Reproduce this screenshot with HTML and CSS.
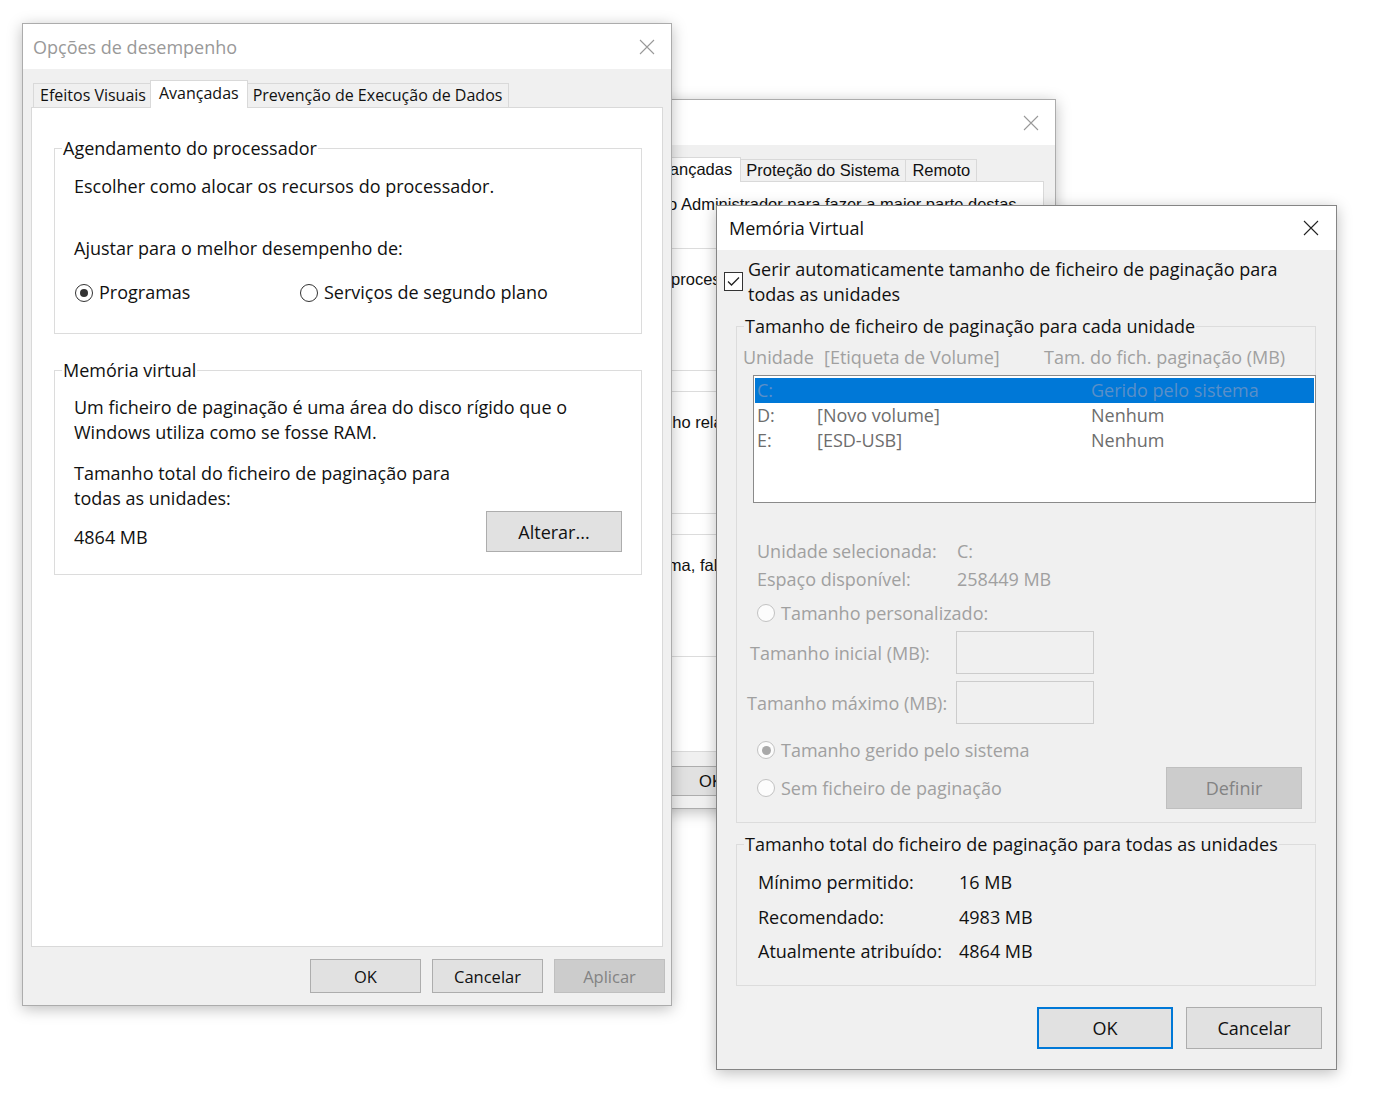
FILE: index.html
```html
<!DOCTYPE html>
<html lang="pt">

<head>
    <meta charset="UTF-8">
    <meta name="viewport" content="width=device-width, initial-scale=1.0">
    <title>Memória Virtual</title>
    <link rel="stylesheet" href="styles.css">
</head>

<body>
    <div class="desktop">

        <!-- Propriedades do Sistema (fica por tras das outras) -->
        <div class="win win-sistema">
            <div class="titlebar">
                <span class="title">Propriedades do Sistema</span>
                <svg class="close" width="16" height="16" viewBox="0 0 16 16"><path d="M1 1L15 15M15 1L1 15" /></svg>
            </div>
            <div class="win-body">
                <div class="tabs">
                    <div class="tab">Nome do Computador</div>
                    <div class="tab">Hardware</div>
                    <div class="tab active">Avançadas</div>
                    <div class="tab">Proteção do Sistema</div>
                    <div class="tab">Remoto</div>
                </div>
                <div class="panel">
                    <p class="aviso">Tem de ter sessão iniciada como Administrador para fazer a maior parte destas alterações.</p>
                    <fieldset class="grp grp-desemp">
                        <legend>Desempenho</legend>
                        <p>Efeitos visuais, agendamento do processador, utilização da memória e memória virtual</p>
                    </fieldset>
                    <fieldset class="grp">
                        <legend>Perfis de Utilizador</legend>
                        <p>Definições do ambiente de trabalho relacionadas com o seu início de sessão</p>
                    </fieldset>
                    <fieldset class="grp grp-arranque">
                        <legend>Arranque e Recuperação</legend>
                        <p>Informações de arranque do sistema, falha do sistema e de depuração</p>
                    </fieldset>
                </div>
                <div class="buttons">
                    <button class="btn">OK</button>
                    <button class="btn">Cancelar</button>
                    <button class="btn off">Aplicar</button>
                </div>
            </div>
        </div>

        <!-- Opções de desempenho -->
        <div class="win win-desempenho">
            <div class="titlebar">
                <span class="title">Opções de desempenho</span>
                <svg class="close" width="16" height="16" viewBox="0 0 16 16"><path d="M1 1L15 15M15 1L1 15" /></svg>
            </div>
            <div class="win-body">
                <div class="tabs">
                    <div class="tab">Efeitos Visuais</div>
                    <div class="tab active">Avançadas</div>
                    <div class="tab">Prevenção de Execução de Dados</div>
                </div>
                <div class="panel">
                    <fieldset class="grp grp-cpu">
                        <legend>Agendamento do processador</legend>
                        <p class="l1">Escolher como alocar os recursos do processador.</p>
                        <p class="l2">Ajustar para o melhor desempenho de:</p>
                        <div class="radios">
                            <label class="opt opt-prog"><span class="radio on"></span>Programas</label>
                            <label class="opt"><span class="radio"></span>Serviços de segundo plano</label>
                        </div>
                    </fieldset>
                    <fieldset class="grp grp-vm">
                        <legend>Memória virtual</legend>
                        <p class="l1">Um ficheiro de paginação é uma área do disco rígido que o<br>Windows utiliza como se fosse RAM.</p>
                        <p class="l3">Tamanho total do ficheiro de paginação para<br>todas as unidades:</p>
                        <div class="vm-row">
                            <span>4864 MB</span>
                            <button class="btn btn-big">Alterar...</button>
                        </div>
                    </fieldset>
                </div>
                <div class="buttons">
                    <button class="btn">OK</button>
                    <button class="btn">Cancelar</button>
                    <button class="btn off">Aplicar</button>
                </div>
            </div>
        </div>

        <!-- Memória Virtual -->
        <div class="win win-virtual">
            <div class="titlebar">
                <span class="title">Memória Virtual</span>
                <svg class="close" width="16" height="16" viewBox="0 0 16 16"><path d="M1 1L15 15M15 1L1 15" /></svg>
            </div>
            <div class="win-body">
                <label class="auto">
                    <span class="check"><svg width="17" height="17" viewBox="0 0 17 17"><path d="M3 8.5L6.5 12L14 4.5" /></svg></span>
                    <span>Gerir automaticamente tamanho de ficheiro de paginação para<br>todas as unidades</span>
                </label>

                <fieldset class="grp grp-drives off">
                    <legend>Tamanho de ficheiro de paginação para cada unidade</legend>
                    <div class="lst-head">
                        <span class="c1">Unidade</span>
                        <span class="c2">[Etiqueta de Volume]</span>
                        <span>Tam. do fich. paginação (MB)</span>
                    </div>
                    <div class="listbox">
                        <div class="row sel"><span class="c1">C:</span><span class="c2"></span><span>Gerido pelo sistema</span></div>
                        <div class="row"><span class="c1">D:</span><span class="c2">[Novo volume]</span><span>Nenhum</span></div>
                        <div class="row"><span class="c1">E:</span><span class="c2">[ESD-USB]</span><span>Nenhum</span></div>
                    </div>
                    <div class="info info-1"><span class="k">Unidade selecionada:</span><span>C:</span></div>
                    <div class="info"><span class="k">Espaço disponível:</span><span>258449 MB</span></div>
                    <label class="opt opt-custom"><span class="radio"></span>Tamanho personalizado:</label>
                    <div class="field field-1"><span class="k">Tamanho inicial (MB):</span><span class="input"></span></div>
                    <div class="field field-2"><span class="k">Tamanho máximo (MB):</span><span class="input"></span></div>
                    <label class="opt opt-sys"><span class="radio on"></span>Tamanho gerido pelo sistema</label>
                    <div class="last-row">
                        <label class="opt"><span class="radio"></span>Sem ficheiro de paginação</label>
                        <button class="btn btn-big off">Definir</button>
                    </div>
                </fieldset>

                <fieldset class="grp grp-total">
                    <legend>Tamanho total do ficheiro de paginação para todas as unidades</legend>
                    <div class="info info-1"><span class="k">Mínimo permitido:</span><span>16 MB</span></div>
                    <div class="info"><span class="k">Recomendado:</span><span>4983 MB</span></div>
                    <div class="info"><span class="k">Atualmente atribuído:</span><span>4864 MB</span></div>
                </fieldset>

                <div class="buttons">
                    <button class="btn btn-big default">OK</button>
                    <button class="btn btn-big">Cancelar</button>
                </div>
            </div>
        </div>

    </div>
</body>

</html>
```

FILE: styles.css
```css
* {
    box-sizing: border-box;
}

body {
    margin: 0;
    background-color: #ffffff;
    font-family: "Open Sans", "Noto Sans", sans-serif;
    font-size: 18px;
    color: #111111;
}

p {
    margin: 0;
    line-height: 25px;
    white-space: nowrap;
}

.desktop {
    position: relative;
    width: 1377px;
    height: 1107px;
    overflow: hidden;
}

/* janelas */
.win {
    position: absolute;
    display: flex;
    flex-direction: column;
    background-color: #f0f0f0;
    border: 1px solid #acacac;
    box-shadow: 0 3px 14px rgba(0, 0, 0, 0.26);
}

.win-sistema {
    left: 372px;
    top: 99px;
    width: 684px;
    height: 710px;
    z-index: 1;
}

.win-desempenho {
    left: 22px;
    top: 23px;
    width: 650px;
    height: 983px;
    z-index: 2;
}

.win-virtual {
    left: 716px;
    top: 205px;
    width: 621px;
    height: 865px;
    z-index: 3;
    border-color: #858585;
}

.titlebar {
    flex: none;
    height: 45px;
    display: flex;
    align-items: center;
    justify-content: space-between;
    padding: 0 16px 0 10px;
    background-color: #ffffff;
}

.title {
    color: #999999;
    white-space: nowrap;
}

.close path {
    stroke: #999999;
    stroke-width: 1.1;
    fill: none;
}

.win-virtual .titlebar {
    height: 44px;
    padding: 0 17px 0 12px;
}

.win-virtual .title {
    color: #111111;
}

.win-virtual .close path {
    stroke: #222222;
}

.win-body {
    flex: 1;
    display: flex;
    flex-direction: column;
}

/* abas */
.tabs {
    flex: none;
    display: flex;
    align-items: flex-end;
    height: 27px;
    position: relative;
    z-index: 1;
    font-size: 16px;
}

.tab {
    height: 24px;
    line-height: 22px;
    padding: 0 6px;
    margin-right: -1px;
    border: 1px solid #d9d9d9;
    border-bottom: none;
    background-color: #f0f0f0;
    white-space: nowrap;
}

.tab.active {
    height: 28px;
    line-height: 25px;
    margin: 0 -2px -1px -2px;
    padding: 0 8px;
    background-color: #ffffff;
    position: relative;
    z-index: 1;
}

.panel {
    flex: 1;
    background-color: #ffffff;
    border: 1px solid #d9d9d9;
}

/* caixas de grupo */
.grp {
    margin: 0;
    padding: 0;
    min-width: 0;
    border: 1px solid #dcdcdc;
}

.grp legend {
    padding: 0 1px;
    margin-left: 7px;
    line-height: 25px;
    white-space: nowrap;
    color: #111111;
}

/* botoes */
.buttons {
    flex: none;
    display: flex;
    justify-content: flex-end;
}

.btn {
    width: 111px;
    height: 34px;
    padding: 0;
    font-family: inherit;
    font-size: inherit;
    color: #111111;
    background-color: #e1e1e1;
    border: 1px solid #adadad;
}

.btn.off {
    color: #838383;
    background-color: #cccccc;
    border-color: #bfbfbf;
}

.btn-big {
    width: 136px;
    height: 41px;
}

.btn.default {
    border: 2px solid #0078d7;
}

/* radio e checkbox */
.opt {
    display: flex;
    align-items: center;
    gap: 6px;
    line-height: 25px;
    white-space: nowrap;
}

.radio {
    flex: none;
    width: 18px;
    height: 18px;
    border: 1px solid #333333;
    border-radius: 50%;
    background-color: #ffffff;
    display: flex;
    align-items: center;
    justify-content: center;
}

.radio.on::after {
    content: "";
    width: 8px;
    height: 8px;
    border-radius: 50%;
    background-color: #333333;
}

.off .radio {
    border-color: #c2c2c2;
    background-color: #fcfcfc;
}

.off .radio.on::after {
    width: 9px;
    height: 9px;
    background-color: #a9a9a9;
}

.check {
    flex: none;
    width: 19px;
    height: 19px;
    border: 1px solid #333333;
    background-color: #ffffff;
    display: flex;
    align-items: center;
    justify-content: center;
}

.check path {
    stroke: #222222;
    stroke-width: 1.3;
    fill: none;
}

/* ---- Opções de desempenho ---- */
.win-desempenho .win-body {
    padding: 11px 8px 12px 8px;
}

.win-desempenho .tabs {
    margin-left: 2px;
}

.win-desempenho .panel {
    padding: 28px 20px 0 22px;
}

.win-desempenho .buttons {
    margin: 12px -2px 0 0;
    gap: 11px;
}

.win-desempenho .buttons .btn {
    font-size: 16.5px;
}

.grp-cpu .l1 {
    margin: 13px 0 0 19px;
}

.grp-cpu .l2 {
    margin: 37px 0 0 19px;
}

.radios {
    display: flex;
    margin: 19px 0 0 20px;
    padding-bottom: 28px;
}

.opt-prog {
    width: 225px;
}

.grp-vm {
    margin-top: 24px !important;
    padding-bottom: 22px;
}

.grp-vm .l1 {
    margin: 12px 0 0 19px;
}

.grp-vm .l3 {
    margin: 16px 0 0 19px;
}

.vm-row {
    display: flex;
    justify-content: space-between;
    align-items: flex-end;
    margin: 0 19px;
}

.vm-row span {
    margin-bottom: 3.5px;
}

/* ---- Memória Virtual ---- */
.win-virtual .win-body {
    padding: 6.5px 14px 0 7px;
}

.auto {
    display: flex;
    align-items: center;
    gap: 5px;
    line-height: 25px;
    white-space: nowrap;
}

.win-virtual .grp {
    margin: 7px 6px 0 12px;
}

.grp.off {
    color: #a0a0a0;
}

.grp-drives {
    padding-bottom: 13px;
}

.lst-head {
    display: flex;
    margin: 6px 0 0 6px;
    line-height: 25px;
    white-space: nowrap;
}

.lst-head .c1 {
    width: 81px;
}

.lst-head .c2 {
    width: 220px;
}

.listbox {
    height: 128px;
    margin: 5.5px -1px 0 16px;
    padding: 2px 1px;
    border: 1px solid #8a8a8a;
    background-color: #ffffff;
    color: #6d6d6d;
}

.row {
    display: flex;
    height: 25px;
    line-height: 25px;
    padding-left: 2px;
    white-space: nowrap;
}

.row .c1 {
    width: 60px;
}

.row .c2 {
    width: 274px;
}

.row.sel {
    background-color: #0078d7;
    color: #5a8fc8;
}

.info {
    display: flex;
    line-height: 25px;
    white-space: nowrap;
}

.grp-drives .info {
    margin: 3px 0 0 20px;
}

.grp-drives .info-1 {
    margin-top: 35.5px;
}

.grp-drives .info .k {
    width: 200px;
}

.opt-custom {
    margin: 9px 0 0 20px;
}

.field {
    display: flex;
    align-items: center;
    margin-top: 7px;
    padding-left: 10px;
    white-space: nowrap;
}

.field-1 {
    margin-top: 5.5px;
    padding-left: 13px;
}

.field .k {
    flex: 1;
}

.input {
    width: 138px;
    height: 43px;
    margin-right: 221px;
    border: 1px solid #cccccc;
}

.opt-sys {
    margin: 13.5px 0 0 20px;
}

.last-row {
    display: flex;
    align-items: center;
    justify-content: space-between;
    margin: 4.5px 13px 0 20px;
}

.last-row .btn {
    height: 42px;
}

.win-virtual .grp-total {
    margin-top: 9px;
    padding-bottom: 21px;
}

.grp-total .info {
    margin: 9.5px 0 0 21px;
}

.grp-total .info-1 {
    margin-top: 13px;
}

.grp-total .info .k {
    width: 201px;
}

.win-virtual .buttons {
    margin-top: 21px;
    gap: 13px;
}

.win-virtual .buttons .btn {
    height: 42px;
}

/* ---- Propriedades do Sistema ---- */
.win-sistema .win-body {
    padding: 12px 11px 12px 11px;
    font-family: "Liberation Sans", Arial, sans-serif;
    font-size: 16.5px;
}

.win-sistema .tabs {
    height: 24px;
    font-size: 16.5px;
}

.win-sistema .tab {
    height: 22px;
    line-height: 21px;
}

.win-sistema .tab.active {
    height: 25px;
    line-height: 22px;
}

.win-sistema .panel {
    padding: 0 11px;
}

.win-sistema p {
    line-height: 19px;
    white-space: normal;
}

.win-sistema .aviso {
    margin-top: 13px;
    padding-left: 41px;
}

.win-sistema .grp {
    height: 132px;
    margin-top: 11px;
}

.win-sistema .aviso + .grp {
    margin-top: 6px;
}

.win-sistema .grp legend {
    line-height: 19px;
}

.win-sistema .grp p {
    margin: 12px 0 0 34px;
}

.win-sistema .grp-desemp p {
    margin-left: 31px;
}

.win-sistema .grp-arranque p {
    margin-left: 25px;
}

.win-sistema .buttons {
    margin-top: 14px;
    gap: 9px;
}

.win-sistema .btn {
    width: 126px;
    height: 30px;
}
```
